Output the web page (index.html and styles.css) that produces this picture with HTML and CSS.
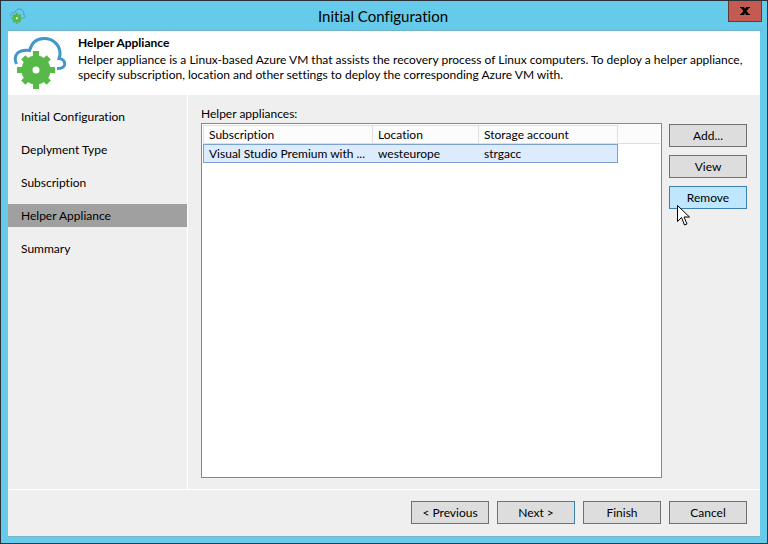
FILE: index.html
```html
<!DOCTYPE html>
<html lang="en">
<head>
    <meta charset="UTF-8">
    <meta name="viewport" content="width=device-width, initial-scale=1.0">
    <title>Initial Configuration</title>
    <link rel="stylesheet" href="styles.css">
</head>
<body>

    <!-- Shared logo: cloud outline with a gear -->
    <svg class="defs" aria-hidden="true">
        <symbol id="logo" viewBox="0 0 54 54">
            <path class="cloud" d="M3.5 29 C-.5 20 5.500 14 16.500 15.500 C19 7 24 3.500 31 3.500 C41 3.500 47.500 11 47 20 L46 23.500 C51 24 52 27 51.500 30 C51 32.500 48 33.500 44 33.500"/>
            <g class="gear">
                <circle cx="23" cy="35" r="14.500"/>
                <path d="M20 16h6v38h-6zM4 32h38v6H4z"/>
                <path d="M20 17h6v36h-6zM5 32h36v6H5z" transform="rotate(45 23 35)"/>
            </g>
            <circle class="hole" cx="23" cy="35" r="3.500"/>
        </symbol>
    </svg>

    <div class="window">
        <div class="titlebar">
            <svg class="title-icon" aria-hidden="true"><use href="#logo"/></svg>
            <span class="title">Initial Configuration</span>
            <button type="button" class="close" aria-label="Close">
                <svg viewBox="0 0 10 8" aria-hidden="true"><path d="M0 0h4l1 2 1-2h4v1H9L6.500 4 9 7h1v1H6L5 6 4 8H0V7h1l2.500-3L1 1H0z"/></svg>
            </button>
        </div>

        <div class="client">
            <header class="header">
                <svg class="header-icon" aria-hidden="true"><use href="#logo"/></svg>
                <div class="header-text">
                    <h1>Helper Appliance</h1>
                    <p>Helper appliance is a Linux-based Azure VM that assists the recovery process of Linux computers. To deploy a helper appliance, specify subscription, location and other settings to deploy the corresponding Azure VM with.</p>
                </div>
            </header>

            <div class="main">
                <nav class="steps">
                    <a href="#">Initial Configuration</a>
                    <a href="#">Deplyment Type</a>
                    <a href="#">Subscription</a>
                    <a href="#" class="active" aria-current="step">Helper Appliance</a>
                    <a href="#">Summary</a>
                </nav>

                <section class="content">
                    <h2 id="list-label">Helper appliances:</h2>
                    <div class="panel">
                        <div class="list">
                            <table aria-labelledby="list-label">
                                <colgroup>
                                    <col class="col-subscription">
                                    <col class="col-location">
                                    <col class="col-storage">
                                    <col>
                                </colgroup>
                                <thead>
                                    <tr>
                                        <th>Subscription</th>
                                        <th>Location</th>
                                        <th>Storage account</th>
                                        <td></td>
                                    </tr>
                                </thead>
                                <tbody>
                                    <tr class="selected">
                                        <td>Visual Studio Premium with ...</td>
                                        <td>westeurope</td>
                                        <td>strgacc</td>
                                    </tr>
                                </tbody>
                            </table>
                        </div>
                        <div class="actions">
                            <button type="button" class="btn">Add...</button>
                            <button type="button" class="btn">View</button>
                            <div class="hover-wrap">
                                <button type="button" class="btn hover">Remove</button>
                                <svg class="pointer" viewBox="0 0 13 21" aria-hidden="true"><path d="M.5 .5v16l4-4 3 7.500 2.500-1-3-7h5.500z"/></svg>
                            </div>
                        </div>
                    </div>
                </section>
            </div>

            <footer class="footer">
                <button type="button" class="btn">&lt; Previous</button>
                <button type="button" class="btn default">Next &gt;</button>
                <button type="button" class="btn">Finish</button>
                <button type="button" class="btn">Cancel</button>
            </footer>
        </div>
    </div>

</body>
</html>
```
FILE: styles.css
```css
/* General styling */
* {
    box-sizing: border-box;
}

body {
    margin: 0;
    font-family: Lato, "Open Sans", sans-serif;
    font-size: 12px;
    font-variant-ligatures: none;
    line-height: 18px;
    color: #000;
}

.defs {
    position: absolute;
    width: 0;
    height: 0;
}

/* Window frame */
.window {
    display: flex;
    flex-direction: column;
    min-height: 100vh;
    padding: 0 7px 6px;
    border: 1px solid #2b3036;
    background-color: #66cbea;
}

.titlebar {
    display: flex;
    align-items: flex-start;
    height: 30px;
    margin-right: -2px;
    border-bottom: 1px solid #6fb2ca;
}

.title-icon {
    width: 16px;
    height: 16px;
    margin: 7px 0 0 2px;
}

.title-icon + .title {
    padding-left: 12px;
}

.title {
    flex: 1;
    font-size: 15px;
    line-height: 30px;
    text-align: center;
}

.close {
    display: flex;
    align-items: center;
    justify-content: center;
    width: 34px;
    height: 21px;
    margin: 0;
    padding: 0;
    border: 1px solid #5f3a39;
    border-top: none;
    background-color: #c45b52;
}

.close svg {
    width: 10px;
    height: 8px;
}

/* Logo */
.cloud {
    fill: none;
    stroke: #4396ca;
    stroke-width: 3;
}

.gear {
    fill: #56b948;
}

.hole {
    fill: #fff;
}

.client {
    flex: 1;
    display: flex;
    flex-direction: column;
    background-color: #efefef;
    border-bottom: 1px solid #78b4cc;
}

/* Header */
.header {
    display: flex;
    gap: 11px;
    height: 64px;
    padding: 3px 8px 0 5px;
    background-color: #fff;
}

.header-icon {
    flex: none;
    width: 54px;
    height: 54px;
    margin-top: 1px;
}

.header-text h1,
.header-text p {
    margin: 0;
}

.header-text h1 {
    font-size: 12px;
    line-height: 18px;
}

.header-text p {
    line-height: 15px;
}

/* Steps on the left */
.main {
    flex: 1;
    display: flex;
}

.steps {
    display: flex;
    flex-direction: column;
    gap: 10px;
    width: 180px;
    padding-top: 10px;
    border-right: 1px solid #fff;
}

.steps a {
    padding-left: 13px;
    line-height: 23px;
    color: #000;
    text-decoration: none;
}

.steps .active {
    background-color: #a0a0a0;
}

/* Appliance list */
.content {
    flex: 1;
    display: flex;
    flex-direction: column;
    padding: 9px 13px 11px;
}

.content h2 {
    margin: 0;
    font-size: 12px;
    line-height: 19px;
    font-weight: normal;
}

.panel {
    flex: 1;
    display: flex;
    gap: 7px;
}

.list {
    flex: 1;
    padding: 1px;
    border: 1px solid #828790;
    background-color: #fff;
}

.list table {
    width: 100%;
    table-layout: fixed;
    border-collapse: separate;
    border-spacing: 0;
}

.col-subscription {
    width: 170px;
}

.col-location {
    width: 106px;
}

.col-storage {
    width: 139px;
}

.list th,
.list td {
    height: 19px;
    padding: 0 5px;
    line-height: 17px;
    font-weight: normal;
    text-align: left;
    white-space: nowrap;
}

.list thead th,
.list thead td {
    border-bottom: 1px solid #dedfe1;
    background-color: #fcfcfc;
}

.list thead th {
    border-top: 1px solid #dedfe1;
    border-right: 1px solid #dedfe1;
}

.list th:first-child {
    border-left: 1px solid #dedfe1;
}

.selected td {
    border: solid #7da2ce;
    border-width: 1px 0;
    background-color: #dcebfd;
}

.selected td:first-child {
    border-left-width: 1px;
}

.selected td:last-child {
    border-right-width: 1px;
}

/* Buttons */
.btn {
    display: block;
    width: 78px;
    height: 23px;
    margin: 0;
    padding: 0;
    border: 1px solid #707070;
    background-color: #ddd;
    font-family: inherit;
    font-size: 12px;
    line-height: 21px;
    color: #000;
    text-align: center;
}

.btn.default {
    border-color: #3c7fb1;
}

.btn.hover {
    border-color: #3c7fb1;
    background-color: #bee6fd;
}

.actions {
    display: flex;
    flex-direction: column;
    gap: 8px;
    padding-top: 1px;
}

.hover-wrap {
    position: relative;
}

.pointer {
    position: absolute;
    left: 8px;
    top: 19px;
    width: 13px;
    height: 21px;
    fill: #fff;
    stroke: #000;
}

/* Footer */
.footer {
    display: flex;
    justify-content: flex-end;
    gap: 8px;
    padding: 11px 13px 12px;
    border-top: 1px solid #fff;
}
```
